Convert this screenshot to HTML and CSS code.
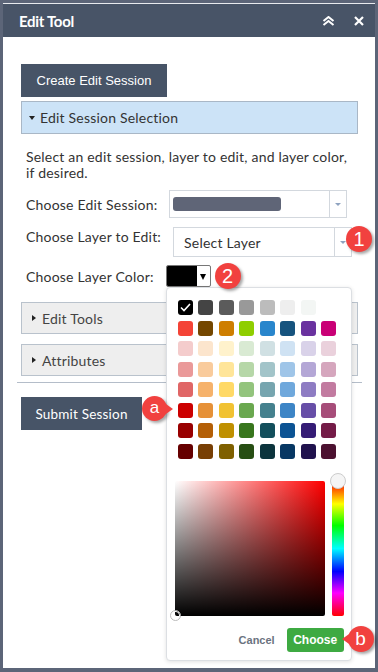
FILE: index.html
```html
<!DOCTYPE html>
<html lang="en">
<head>
    <meta charset="UTF-8">
    <meta name="viewport" content="width=device-width, initial-scale=1.0">
    <title>Edit Tool</title>
    <link rel="stylesheet" href="styles.css">
</head>
<body>
    <div class="panel">
        <div class="panel-header">
            <span class="panel-title">Edit Tool</span>
            <span class="header-icons">
                <svg width="13" height="10" viewBox="0 0 13 10"><path d="M1.5 5 L6.5 1 L11.5 5 M1.5 9 L6.5 5 L11.5 9" fill="none" stroke="#fff" stroke-width="2"/></svg>
                <svg width="10" height="10" viewBox="0 0 10 10"><path d="M1 1 L9 9 M9 1 L1 9" fill="none" stroke="#fff" stroke-width="2.2"/></svg>
            </span>
        </div>

        <div class="panel-body">
            <button class="btn-create">Create Edit Session</button>

            <!-- Open section -->
            <div class="section section-open"><span class="caret caret-down"></span>Edit Session Selection</div>

            <div class="fields">
                <p class="intro">Select an edit session, layer to edit, and layer color, if desired.</p>

                <div class="field-row">
                    <label>Choose Edit Session:</label>
                    <div class="select select-session">
                        <span class="select-value"><span class="redacted"></span></span>
                        <span class="select-arrow"></span>
                    </div>
                </div>

                <div class="field-row field-row-layer">
                    <label>Choose Layer to Edit:</label>
                    <div class="select select-layer">
                        <span class="select-value">Select Layer</span>
                        <span class="select-arrow"></span>
                        <span class="badge badge-1">1</span>
                    </div>
                </div>

                <div class="field-row">
                    <label>Choose Layer Color:</label>
                    <div class="color-anchor">
                        <div class="color-btn"><span class="color-chip"></span><span class="color-drop"></span></div>
                        <span class="badge badge-2">2</span>

                        <!-- Color picker popup -->
                        <div class="picker">
                            <div class="swatches" id="swatches"></div>
                            <div class="picker-area">
                                <div class="sv-box"><span class="sv-handle"></span></div>
                                <div class="hue-bar"><span class="hue-handle"></span></div>
                            </div>
                            <div class="picker-footer">
                                <span class="btn-cancel">Cancel</span>
                                <span class="btn-choose">Choose<span class="badge badge-b">b</span></span>
                            </div>
                        </div>
                    </div>
                </div>
            </div>

            <div class="section"><span class="caret caret-right"></span>Edit Tools</div>
            <div class="section section-attr"><span class="caret caret-right"></span>Attributes</div>

            <hr>

            <div class="submit-row">
                <button class="btn-submit">Submit Session</button>
                <span class="badge badge-a">a</span>
            </div>
        </div>
    </div>

    <script>
        // Palette shown in the picker, one array per row
        const palette = [
            ['#000000', '#444444', '#5b5b5b', '#999999', '#bcbcbc', '#eeeeee', '#f3f6f4', '#ffffff'],
            ['#f44336', '#744700', '#ce7e00', '#8fce00', '#2986cc', '#16537e', '#6a329f', '#c90076'],
            ['#f4cccc', '#fce5cd', '#fff2cc', '#d9ead3', '#d0e0e3', '#cfe2f3', '#d9d2e9', '#ead1dc'],
            ['#ea9999', '#f9cb9c', '#ffe599', '#b6d7a8', '#a2c4c9', '#9fc5e8', '#b4a7d6', '#d5a6bd'],
            ['#e06666', '#f6b26b', '#ffd966', '#93c47d', '#76a5af', '#6fa8dc', '#8e7cc3', '#c27ba0'],
            ['#cc0000', '#e69138', '#f1c232', '#6aa84f', '#45818e', '#3d85c6', '#674ea7', '#a64d79'],
            ['#990000', '#b45f06', '#bf9000', '#38761d', '#134f5c', '#0b5394', '#351c75', '#741b47'],
            ['#660000', '#783f04', '#7f6000', '#274e13', '#0c343d', '#073763', '#20124d', '#4c1130']
        ];

        const grid = document.getElementById('swatches');
        palette.flat().forEach((color, i) => {
            const sw = document.createElement('span');
            sw.className = 'swatch';
            sw.style.background = color;
            if (i === 0) {
                sw.innerHTML = '<svg width="15" height="15" viewBox="0 0 15 15"><path d="M3 7.5 L6 10.5 L12 4" fill="none" stroke="#fff" stroke-width="1.6"/></svg>';
            }
            grid.appendChild(sw);
        });
    </script>
</body>
</html>
```

FILE: styles.css
```css
/* Reset */
body, p, hr {
    margin: 0;
    padding: 0;
}

body {
    background: #5c6578;
    font-family: 'Lato', 'Open Sans', sans-serif;
    color: #333;
    height: 672px;
    overflow: hidden;
}

.panel {
    margin: 3px 3px 0 3px;
    width: 372px;
    height: 665px;
    background: #fff;
    border-top: 1px solid #e8eaee;
    box-sizing: border-box;
}

/* Header bar */
.panel-header {
    height: 33px;
    background: #485467;
    display: flex;
    align-items: center;
    justify-content: space-between;
    padding: 0 11px 0 16px;
}

.panel-title {
    color: #fff;
    font-weight: bold;
    font-size: 15px;
    letter-spacing: -0.3px;
}

.header-icons {
    display: flex;
    align-items: center;
    gap: 19px;
}

.panel-body {
    padding: 27px 17px 0 18px;
}

/* Buttons */
.btn-create, .btn-submit {
    background: #475467;
    color: #fff;
    border: none;
    height: 33px;
    padding: 0;
    display: block;
}

.btn-create {
    width: 146px;
    font-family: 'Liberation Sans', Arial, sans-serif;
    font-size: 13px;
}

.btn-submit {
    width: 121px;
    font-family: 'Lato', sans-serif;
    font-size: 13.5px;
    letter-spacing: 0.2px;
}

/* Accordion sections */
.section {
    height: 32px;
    border: 1px solid #b9c2cc;
    background: #eeeeee;
    box-sizing: border-box;
    display: flex;
    align-items: center;
    padding-left: 10px;
    font-size: 14px;
    letter-spacing: 0.2px;
    color: #444;
    margin-top: 10px;
}

.section-open {
    height: 33px;
    margin-top: 4px;
    background: #cce3f7;
    border-color: #a9b7c6;
    color: #333;
    padding-left: 7px;
}

.caret {
    width: 0;
    height: 0;
    margin-right: 5px;
}

.caret-down {
    border-left: 3px solid transparent;
    border-right: 3px solid transparent;
    border-top: 4px solid #222;
}

.caret-right {
    border-top: 3px solid transparent;
    border-bottom: 3px solid transparent;
    border-left: 4px solid #222;
    margin-right: 6px;
}

/* Form area */
.fields {
    padding-left: 5px;
    font-size: 14px;
    letter-spacing: 0.2px;
    margin-bottom: 15px;
}

.fields + .section {
    margin-top: 0;
}

.intro {
    margin-top: 15px;
    line-height: 16px;
    color: #333;
}

.field-row {
    display: flex;
    align-items: center;
    gap: 12px;
    margin-top: 9px;
}

.field-row:last-child {
    margin-top: 8px;
}

.field-row label {
    color: #333;
}

.field-row-layer {
    align-items: flex-start;
}

.field-row-layer label {
    line-height: 20px;
}

.select {
    position: relative;
    border: 1px solid #d3d8de;
    box-sizing: border-box;
    display: flex;
    align-items: center;
}

.select-session {
    width: 178px;
    height: 28px;
}

.select-layer {
    width: 179px;
    height: 30px;
}

.select-value {
    flex: 1;
    padding-left: 3px;
    font-size: 14px;
    color: #333;
}

.select-layer .select-value {
    padding-left: 10px;
}

.redacted {
    display: block;
    width: 108px;
    height: 14px;
    border-radius: 3px;
    background: #5f6577;
}

.select-arrow {
    width: 16px;
    height: 100%;
    border-left: 1px solid #d3d8de;
    position: relative;
}

.select-arrow::after {
    content: '';
    position: absolute;
    left: 5px;
    top: 50%;
    margin-top: -1px;
    border-left: 3px solid transparent;
    border-right: 3px solid transparent;
    border-top: 3px solid #8fa3c0;
}

/* Color button and picker */
.color-anchor {
    position: relative;
}

.color-btn {
    width: 45px;
    height: 22px;
    border: 1px solid #777;
    border-radius: 2px;
    box-sizing: border-box;
    display: flex;
    overflow: hidden;
}

.color-chip {
    width: 30px;
    background: #000;
}

.color-drop {
    flex: 1;
    position: relative;
}

.color-drop::after {
    content: '';
    position: absolute;
    left: 3px;
    top: 8px;
    border-left: 3px solid transparent;
    border-right: 3px solid transparent;
    border-top: 6px solid #000;
}

.picker {
    position: absolute;
    left: 0;
    top: 22px;
    width: 186px;
    height: 374px;
    box-sizing: border-box;
    background: #fff;
    border: 1px solid #dcdfe3;
    border-radius: 4px;
    box-shadow: 0 1px 4px rgba(0, 0, 0, 0.12);
    padding: 12px 7px 0 8px;
    letter-spacing: 0;
    z-index: 5;
}

.swatches {
    display: grid;
    grid-template-columns: repeat(8, 15px);
    grid-auto-rows: 15px;
    gap: 5.5px;
    margin-left: 3px;
}

.swatch {
    display: block;
    border-radius: 3px;
}

.picker-area {
    display: flex;
    gap: 7px;
    margin-top: 22px;
}

.sv-box {
    position: relative;
    width: 150px;
    height: 135px;
    border-radius: 2px;
    background:
        linear-gradient(to top, #000, rgba(0, 0, 0, 0)),
        linear-gradient(to right, #fff, rgba(255, 255, 255, 0)),
        #ff0000;
}

.sv-handle {
    position: absolute;
    left: -5px;
    bottom: -5px;
    width: 9px;
    height: 9px;
    border-radius: 50%;
    border: 1px solid #bbb;
    box-shadow: inset 0 0 0 1px #fff;
}

.hue-bar {
    position: relative;
    width: 12px;
    height: 135px;
    border-radius: 2px;
    background: linear-gradient(to bottom, #f00 0%, #ff0 17%, #0f0 33%, #0ff 50%, #00f 67%, #f0f 83%, #f00 100%);
}

.hue-handle {
    position: absolute;
    left: -2px;
    top: -8px;
    width: 14px;
    height: 14px;
    border-radius: 50%;
    background: #f5f5f5;
    border: 1px solid #ccc;
}

.picker-footer {
    display: flex;
    justify-content: flex-end;
    align-items: center;
    gap: 12px;
    margin-top: 12px;
    font-family: 'Liberation Sans', Arial, sans-serif;
    font-weight: bold;
    font-size: 11px;
}

.btn-cancel {
    color: #6b7380;
}

.btn-choose {
    position: relative;
    width: 57px;
    height: 24px;
    border-radius: 3px;
    background: #3eaa42;
    color: #fff;
    font-size: 12px;
    display: flex;
    align-items: center;
    justify-content: center;
}

/* Callout badges */
.badge {
    position: absolute;
    width: 26px;
    height: 26px;
    border-radius: 50%;
    background: #f1413f;
    color: #fff;
    font-family: 'Liberation Sans', Arial, sans-serif;
    font-weight: normal;
    font-size: 20px;
    line-height: 26px;
    text-align: center;
    letter-spacing: 0;
    box-shadow: 2px 2px 3px rgba(0, 0, 0, 0.35);
    z-index: 6;
}

.badge-1 {
    right: -21px;
    top: -2px;
}

.badge-2 {
    left: 49px;
    top: -2px;
}

.badge-a {
    left: 121px;
    top: -1px;
    width: 25px;
    height: 25px;
    line-height: 23px;
    font-size: 17px;
}

.badge-a::after {
    content: '';
    position: absolute;
    left: 21px;
    top: 6px;
    border-top: 7px solid transparent;
    border-bottom: 7px solid transparent;
    border-left: 10px solid #f1413f;
}

.badge-b {
    left: 61px;
    top: -2px;
    font-size: 19px;
}

.badge-b::before {
    content: '';
    position: absolute;
    right: 22px;
    top: 6px;
    border-top: 7px solid transparent;
    border-bottom: 7px solid transparent;
    border-right: 10px solid #f1413f;
}

.submit-row {
    position: relative;
    margin-top: 14px;
}

hr {
    border: none;
    border-top: 1px solid #b4bdc9;
    margin: 6px -4px 0 -4px;
}
```
